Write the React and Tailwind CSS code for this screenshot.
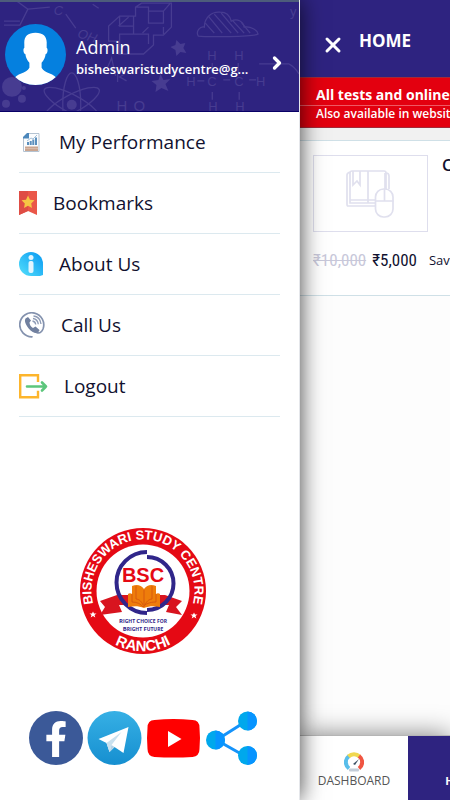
import { ChevronRight, X } from "lucide-react";
import { FaFacebookF } from "react-icons/fa";

const menuItems = [
    { label: "My Performance", Icon: ReportIcon },
    { label: "Bookmarks", Icon: BookmarkIcon },
    { label: "About Us", Icon: InfoIcon },
    { label: "Call Us", Icon: CallIcon },
    { label: "Logout", Icon: LogoutIcon },
];

function ReportIcon() {
    return (
        <svg viewBox="0 0 24 24" className="h-6 w-6" aria-hidden="true">
            <path d="M4.500 8 9.500 3.500H20v18H4.500z" fill="#fbfcfd" stroke="#b4c3d2" />
            <path d="M4 8.500V7l4-4h2v5.500z" fill="#4c87bb" />
            <path d="M8 15v-3h2v3zm2.700 0v-4h2v4zm2.600 0V9.500h2V15zm2.700 0V7.500h2V15z" fill="#5b8fbd" />
            <path d="m8 11 4-3 2 1 4-4" fill="none" stroke="#a5c1da" />
            <path d="M6 16.500h13V21H6z" fill="#c9a590" />
            <path d="M6 18.500h13" stroke="#d8bbaa" />
        </svg>
    );
}

function BookmarkIcon() {
    return (
        <svg viewBox="0 0 18 24" className="h-6 w-[18px]" aria-hidden="true">
            <path d="M0 0h18v24l-9-4-9 4z" fill="#ea5749" />
            <path d="M0 0h9v20l-9 4z" fill="#df4d45" />
            <path d="m9 4.500 2 4.200 4.500.600-3.300 3.200.800 4.500-4-2.200L5 17l.800-4.500-3.300-3.200 4.500-.600z" fill="#f6c644" />
        </svg>
    );
}

function InfoIcon() {
    return (
        <svg viewBox="0 0 24 24" className="h-6 w-6" aria-hidden="true">
            <defs>
                <linearGradient id="info" x1="1" y1="0" x2="0" y2="1">
                    <stop offset="0" stopColor="#0798f2" />
                    <stop offset="1" stopColor="#55e0fb" />
                </linearGradient>
            </defs>
            <path d="M12 0a12 12 0 0 1 12 12v11l-3 1h-9a12 12 0 0 1 0-24z" fill="url(#info)" />
            <circle cx="12" cy="5.500" r="2.500" fill="#e2f5ff" />
            <rect x="9.500" y="9" width="5" height="12" rx="2" fill="#e2f5ff" />
        </svg>
    );
}

function CallIcon() {
    return (
        <svg viewBox="0 0 26 26" className="h-[26px] w-[26px]" fill="none" aria-hidden="true">
            <path d="M13 24.800A12 12 0 1 1 24 17c-1.500 3.500-4 4.500-6.500 3.500" stroke="#8492ae" strokeWidth="1.700" strokeLinecap="round" />
            <path d="M9 5 6.500 6.500c-2.500 3.500 3.500 12.500 9.500 14.500 2 .5 4.500-1.500 4.500-3l-4-3.500-2.500 1.500c-2-1-3.500-3.500-3.500-5.500L12 8.500z" fill="#71809f" />
            <path d="M13.500 9c1.800.3 3 1.700 3.200 3.500M14 6.500c3 .5 5 2.600 5.300 5.800M14.500 4c4.300.5 7 3.500 7.500 8" stroke="#8d9ab5" strokeWidth="1.300" />
        </svg>
    );
}

function LogoutIcon() {
    return (
        <svg viewBox="0 0 29 26" className="h-[26px] w-[29px]" fill="none" aria-hidden="true">
            <path d="M19 9V2.200H1.200v22H19v-6.500" stroke="#fdb52c" strokeWidth="2.400" />
            <path d="M8 13.500h19M23 9.500l4 4-4 4" stroke="#5cc67c" strokeWidth="2.600" strokeLinecap="round" strokeLinejoin="round" />
        </svg>
    );
}

function Avatar() {
    return (
        <svg viewBox="0 0 60 60" className="mb-1 h-[61px] w-[61px] shrink-0" role="img" aria-label="Admin">
            <defs><clipPath id="avatar"><circle cx="30" cy="30" r="30" /></clipPath></defs>
            <g clipPath="url(#avatar)">
                <path d="M0 0h60v60H0z" fill="#0580df" />
                <path d="M30 8.500c-8 0-11.500 4-11 11v4c-1.500.5-1 6 1 6 .5 4 2 6.500 4 8.500v5c-3 6-13 5-16 12v8h44v-8c-3-7-13-6-16-12v-5c2-2 3.500-4.500 4-8.500 2 0 2.500-5.500 1-6v-4c.5-7-3-11-11-11z" fill="#fff" />
            </g>
        </svg>
    );
}

// Faint science drawings behind the profile
function Doodles() {
    return (
        <svg
            viewBox="0 0 300 111"
            preserveAspectRatio="xMidYMid slice"
            className="absolute inset-0 h-full w-full font-['Liberation_Sans',sans-serif]"
            fill="none"
            stroke="#473c91"
            strokeWidth="1.300"
            aria-hidden="true">
            <path d="m17 0 11 8-8 16H4m24-16 22-2M4 20h16M66 13l10 14M93 3l6 4" />
            <path d="M120 15h16v-9l6-4h30v24l-8 8h-10v10l-10 9h-25V40h-10V25l11-10zm0 0v10h14V15m0 10v8h15v10m-15-10h-14v20m16-47h13v16h15V10l7-8m-7 8h-15m15 16v7m-15-7-6 6m-24-7 10-9" />
            <path d="M199 35c-3-5 2-10 6-9 0-10 8-16 16-15 7 0 10 5 11 9 6-3 12 0 13 6 7-1 13 3 14 7-4 3-53 3-60 2z" />
            <path d="m206 22 9 10m-6-17 14 17m-8-19 17 19m-10-20 17 20m-6-13 12 13m-3-11 9 11" />
            <g fill="#473c91" stroke="none">
                <path d="m177 39 4 4 5-1-2 5 3 5-6-1-4 4-1-6-5-3 5-2zM161 73l3 6 7-1-5 5 3 7-7-3-6 4 1-7-5-4 7-1z" />
                <circle cx="12" cy="86" r="10" />
                <circle cx="22" cy="98" r="4" />
                <circle cx="6" cy="103" r="4" />
                <circle cx="24" cy="87" r="2" />
                <circle cx="72" cy="104" r="5" />
            </g>
            <ellipse cx="72" cy="103" rx="31" ry="9" transform="rotate(28 72 103)" />
            <ellipse cx="72" cy="103" rx="31" ry="9" transform="rotate(-28 72 103)" />
            <ellipse cx="72" cy="103" rx="9" ry="31" />
            <path d="m105 73 7-16 4 18m-9-7h8m3 3 6-2m-6 4v8m7-8-5 3 7 4" />
            <path d="M198 80h7m19-1h7m19 0h7M213 62v10m26-10v10m-26 19v8m27-8v8M260 63h30c4 2 7 5 10 10" />
            <g fill="#473c91" stroke="none" fontSize="13">
                <text x="54" y="14" fontStyle="italic">C</text>
                <text x="77" y="36" fontStyle="italic" transform="rotate(18 77 36)">OH</text>
                <text x="291" y="15">y</text>
                <text x="208" y="59">H</text>
                <text x="235" y="59">H</text>
                <text x="187" y="85">H</text>
                <text x="208" y="85">C</text>
                <text x="235" y="85">C</text>
                <text x="257" y="85">H</text>
                <text x="209" y="110">H</text>
                <text x="236" y="110">H</text>
                <text x="117" y="110" fontSize="15">H</text>
                <text x="134" y="110" fontSize="15">O</text>
            </g>
        </svg>
    );
}

function Logo() {
    return (
        <svg viewBox="0 0 126 126" className="h-[126px] w-[126px] font-['Liberation_Sans',sans-serif] font-bold" role="img" aria-label="Bisheswari Study Centre, Ranchi">
            <defs>
                <path id="arc-top" d="M18 88A51.500 51.500 0 1 1 108 88" />
                <path id="arc-bottom" d="M5 77A59.500 59.500 0 0 0 121 77" />
            </defs>
            <circle cx="63" cy="63" r="63" fill="#e50914" />
            <circle cx="63" cy="63" r="46.500" fill="#fff" />
            <g fill="#fff">
                <text fontSize="13">
                    <textPath href="#arc-top" startOffset="50%" textAnchor="middle">BISHESWARI STUDY CENTRE</textPath>
                </text>
                <text fontSize="15">
                    <textPath href="#arc-bottom" startOffset="50%" textAnchor="middle">RANCHI</textPath>
                </text>
                <path id="logo-star" d="m13 83.500 1 2h2.500l-2 1.600.8 2.400-2.300-1.400-2.300 1.400.8-2.400-2-1.600H12z" />
                <use href="#logo-star" x="101" y="1" />
            </g>
            <path d="m20 73 17-6h48l17 6-6 6 6 8-16-3 3-7H39l3 7-22 3 5-8z" fill="#d8141f" />
            <path d="M44 77h37v7H44z" fill="#fff" />
            <path d="M67 24A30.500 30.500 0 0 0 67 85" fill="none" stroke="#30268a" strokeWidth="4" />
            <path d="M67 29A26.500 26.500 0 0 1 67 82" fill="none" stroke="#30268a" strokeWidth="4" />
            <text x="63" y="54" fontSize="20" textAnchor="middle" fill="#e50914">BSC</text>
            <path d="M48 66c1-1 3-1 4 0V58c5-2 9-1 12 3 3-4 7-5 12-3v8c1-1 3-1 4 0v13c-6-1-11-1-16 1-5-2-10-2-16-1z" fill="#ee7d0b" />
            <path d="M64 62v17M52 66v8c5 0 9 2 11 5 2-3 7-5 13-5v-8M56 58v13c3 0 6 3 7 6m9-19v13c-3 0-6 3-7 6" fill="none" stroke="#d2520f" strokeWidth=".800" />
            <g fill="#30268a" textAnchor="middle" className="font-['Open_Sans',sans-serif]">
                <text x="63" y="95" fontSize="6">
                    R<tspan fontSize="5">IGHT </tspan>C<tspan fontSize="5">HOICE FOR</tspan>
                </text>
                <text x="63" y="103" fontSize="6">
                    B<tspan fontSize="5">RIGHT </tspan>F<tspan fontSize="5">UTURE</tspan>
                </text>
            </g>
        </svg>
    );
}

function SocialLinks() {
    return (
        <div className="flex items-center gap-1 pl-[29px]">
            <a href="#facebook" aria-label="Facebook" className="flex h-[54px] w-[54px] items-end justify-center overflow-hidden rounded-full bg-[#3b5998] pb-2 text-white">
                <FaFacebookF className="h-9 w-9" />
            </a>
            <a href="#telegram" aria-label="Telegram">
                <svg viewBox="0 0 54 54" className="h-[54px] w-[55px]">
                    <defs>
                        <linearGradient id="telegram" x2="0" y2="1">
                            <stop stopColor="#36b0e5" />
                            <stop offset="1" stopColor="#168fd0" />
                        </linearGradient>
                    </defs>
                    <circle cx="27" cy="27" r="27" fill="url(#telegram)" />
                    <path d="m11 28 30-12-5 26-9-6-5 5-3-9z" fill="#fff" />
                    <path d="m19 32 15-11-10 13-2 7z" fill="#c9e1ef" />
                    <path d="m24 34 3 2-5 5z" fill="#b2d3e8" />
                </svg>
            </a>
            <a href="#youtube" aria-label="YouTube">
                <svg viewBox="0 0 54 54" className="h-[54px] w-[55px]">
                    <path d="M8 9q19-2 38 0 7 0 7 8 1 10 0 21 0 7-7 8-19 1-38 0-7-1-7-8-1-11 0-21 0-8 7-8z" fill="red" />
                    <path d="M21.500 20v16L35 28z" fill="#fff" />
                </svg>
            </a>
            <a href="#share" aria-label="Share">
                <svg viewBox="0 0 54 54" className="h-[54px] w-[55px]">
                    <path d="m11 29 30-19M11 29l30 17" stroke="#1593fa" strokeWidth="3" />
                    <g fill="#00a8ec">
                        <circle cx="10" cy="29" r="9.500" />
                        <circle cx="42" cy="10" r="9.500" />
                        <circle cx="42" cy="44.500" r="9.500" />
                    </g>
                    <path d="M10 19.500a9.500 9.500 0 0 1 0 19zM42 .500a9.500 9.500 0 0 1 0 19zM42 35a9.500 9.500 0 0 1 0 19z" fill="#0794ff" />
                </svg>
            </a>
        </div>
    );
}

function Drawer() {
    return (
        <aside className="z-10 flex w-2/3 shrink-0 flex-col border-r border-gray-200 bg-white shadow-[0_0_22px_rgba(0,0,0,0.75)]">
            <header className="relative h-28 shrink-0 border-t-2 border-b border-t-[#4d5c7b] border-b-[#080066] bg-[#2e2380] text-white">
                <Doodles />
                <button type="button" className="relative flex h-full w-full items-center gap-[10px] pr-3 pl-[5px] text-left">
                    <Avatar />
                    <span className="min-w-0 flex-1">
                        <span className="block text-lg leading-6">Admin</span>
                        <span className="block truncate text-[13px] leading-5 font-semibold">bisheswaristudycentre@g...</span>
                    </span>
                    <ChevronRight className="mt-3 h-5 w-5" strokeWidth={4} />
                </button>
            </header>

            <nav className="px-[19px]">
                {menuItems.map(({ label, Icon }) => (
                    <a
                        key={label}
                        href="#menu"
                        className="flex h-[61px] items-center gap-4 border-b border-[#dce9ef] text-[19px] text-[#11112f]">
                        <Icon />
                        {label}
                    </a>
                ))}
            </nav>

            <div className="flex flex-1 items-center justify-center pt-[54px] pr-3">
                <Logo />
            </div>
            <div className="pb-[35px]">
                <SocialLinks />
            </div>
        </aside>
    );
}

function CourseIcon() {
    return (
        <svg viewBox="0 0 48 48" className="h-12 w-12" fill="none" stroke="#e0e0ee" strokeWidth="1.700" aria-hidden="true">
            <path d="M29 36H2q-1 0-1-2V5q0-2 3-3M29 33H4V3q0-2 2-2h32q2 0 2 2v16M4 30h25M22 1v32M40 3q3 0 3 3v13M39 3v16" />
            <path d="M7 1v14l4-4 3 4V1" />
            <rect x="29.500" y="19" width="17.500" height="28" rx="8" fill="#fff" />
            <path d="M29.500 31h18M38.500 19v12" />
        </svg>
    );
}

function GaugeIcon() {
    return (
        <svg viewBox="0 0 20 20" className="h-5 w-5" fill="none" aria-hidden="true">
            <path d="M5 16.500A7.800 7.800 0 0 1 5 4" stroke="#58bdea" strokeWidth="4" />
            <path d="M4.500 4.500a7.800 7.800 0 0 1 11 0" stroke="#f0d850" strokeWidth="4" />
            <path d="M15 4a7.800 7.800 0 0 1 0 12.500" stroke="#f05542" strokeWidth="4" />
            <path d="m9 12 6-5-4 6z" fill="#3e5266" />
            <rect x="5" y="16.500" width="10" height="3" rx="1" fill="#c4cdd8" />
        </svg>
    );
}

function HomePage() {
    return (
        <main className="flex min-w-0 flex-1 flex-col overflow-hidden bg-[#fdfdfd] whitespace-nowrap">
            <header className="flex h-[77px] shrink-0 items-center gap-[14px] bg-[#2e2380] pl-[21px] text-white">
                <button type="button" aria-label="Close menu" className="pt-3">
                    <X className="h-6 w-6" strokeWidth={3} />
                </button>
                <h1 className="pt-1 text-[17px] font-bold">HOME</h1>
            </header>
            <div className="h-[51px] shrink-0 border-y border-[#a32a38] bg-[#e3000f] pt-[7px] font-semibold text-white">
                <p className="border-b border-[#ee5964] pl-4 text-sm leading-5 font-bold">All tests and online</p>
                <p className="pl-4 text-xs leading-4">Also available in website</p>
            </div>

            <div className="bg-[#f1f1f1] pt-3">
                <article className="h-[156px] border-y border-[#cfe0e7] bg-white pt-[14px] pl-[13px]">
                    <div className="flex gap-[14px]">
                        <div className="flex h-[77px] w-[115px] shrink-0 items-center justify-center border border-[#dedeed]">
                            <CourseIcon />
                        </div>
                        <h2 className="text-base leading-5 font-semibold text-[#11112f]">Course</h2>
                    </div>
                    <p className="flex h-[58px] items-center gap-[6px] text-[#11112f]">
                        <s className="font-['Roboto_Condensed','Roboto',sans-serif] text-[17px] text-[#c8c8da]">₹10,000</s>
                        <span className="font-['Roboto_Condensed','Roboto',sans-serif] text-[17px]">₹5,000</span>
                        <span className="pl-[6px] text-[13px]">Save</span>
                    </p>
                </article>
            </div>

            <nav className="mt-auto flex h-[65px] shrink-0 border-t border-[#b5b5b5] text-xs shadow-[0_0_26px_rgba(0,0,0,0.5)]">
                <a href="#dashboard" className="flex w-[108px] shrink-0 flex-col items-center justify-end gap-px bg-white pb-[11px] text-[#555]">
                    <GaugeIcon />
                    DASHBOARD
                </a>
                <a href="#home" className="flex w-[108px] shrink-0 items-end justify-center bg-[#2e2380] pb-[11px] text-[11px] font-bold text-white">
                    HOME
                </a>
            </nav>
        </main>
    );
}

function App() {
    return (
        <div className="flex min-h-screen overflow-hidden bg-white font-['Open_Sans',sans-serif]">
            <Drawer />
            <HomePage />
        </div>
    );
}

export default App;
